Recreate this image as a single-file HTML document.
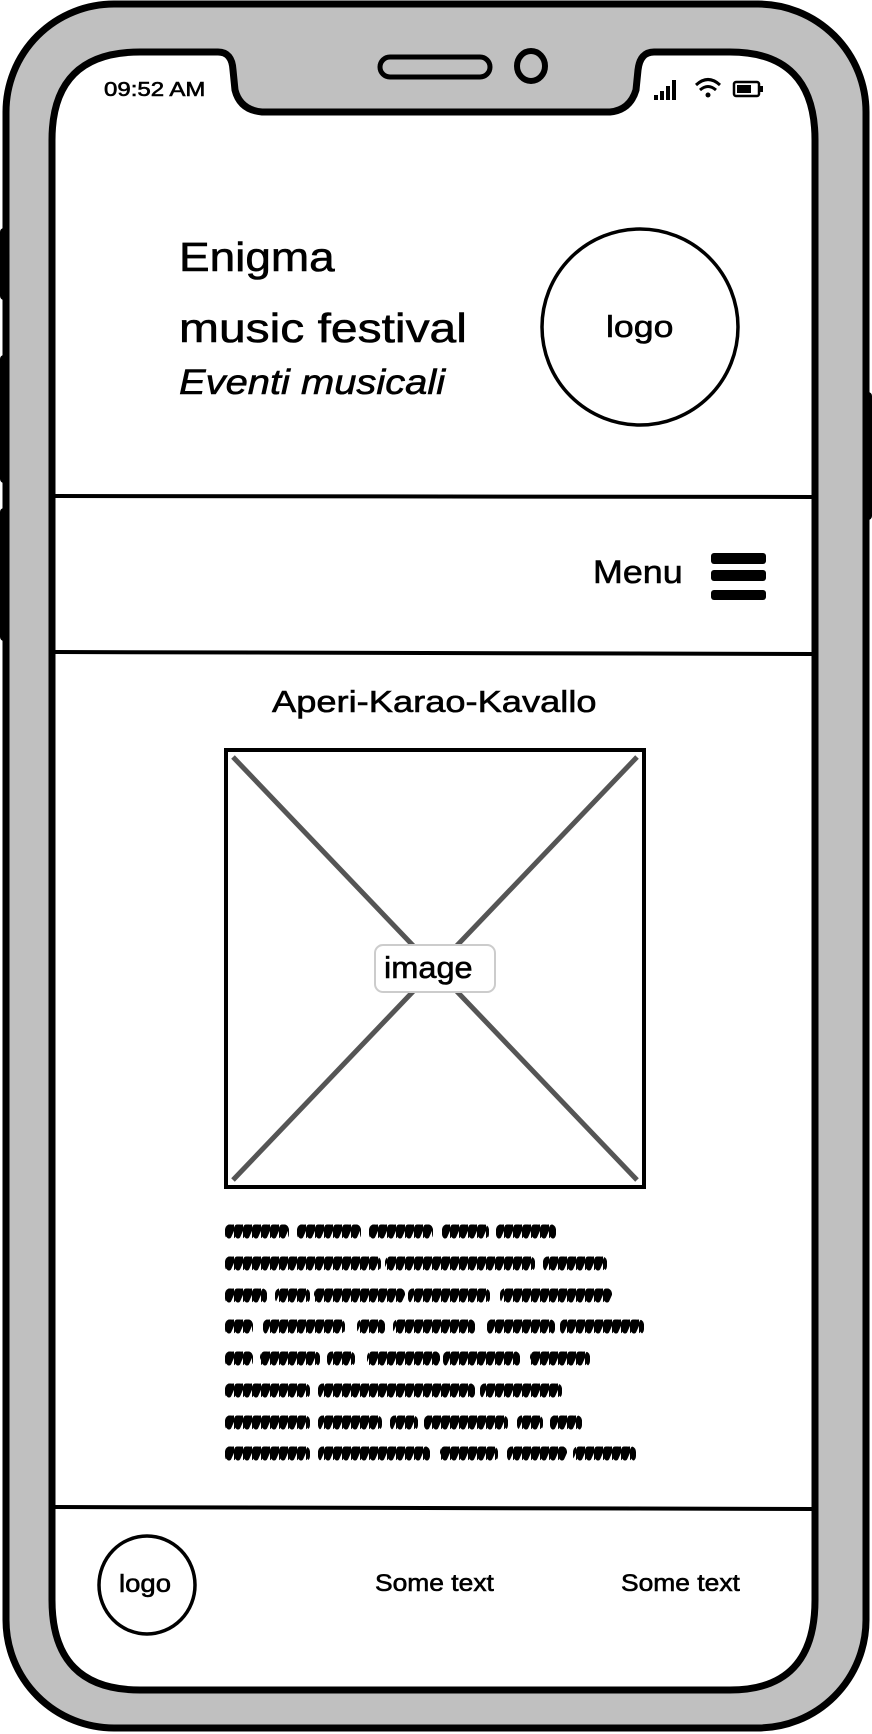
<!DOCTYPE html>
<html><head><meta charset="utf-8"><style>
html,body{margin:0;padding:0;background:#fff;}
body{width:872px;height:1734px;position:relative;overflow:hidden;font-family:"Liberation Sans",sans-serif;color:#000;}
.t{position:absolute;white-space:nowrap;line-height:1;transform-origin:0 0;-webkit-text-stroke:0.6px #000;}
</style></head><body>
<svg width="872" height="1734" style="position:absolute;left:0;top:0">
<defs>
<pattern id="z" width="9" height="16" patternUnits="userSpaceOnUse">
<path d="M-1 12 L3 3 L6 3 L4 12 L8 3 L10 3" stroke="#000" stroke-width="5" fill="none" stroke-linejoin="round" stroke-linecap="round"/>
</pattern>
</defs>
<rect x="0" y="228" width="10" height="72" rx="4" fill="#000"/>
<rect x="0" y="355" width="10" height="128" rx="4" fill="#000"/>
<rect x="0" y="508" width="10" height="133" rx="4" fill="#000"/>
<rect x="862" y="392" width="10" height="128" rx="4" fill="#000"/>
<rect x="6" y="4" width="860" height="1724" rx="108" fill="#c0c0c0" stroke="#000" stroke-width="7"/>
<path d="M140 52 L218 52 Q232 52 233 70 L235 90 Q240 110 262 112 L610 112 Q630 110 636 90 L638 70 Q640 52 654 52 L730 52 Q815 52 815 140 L815 1600 Q815 1690 730 1690 L140 1690 Q52 1690 52 1600 L52 140 Q52 52 140 52 Z" fill="#fff" stroke="#000" stroke-width="7"/>
<rect x="380" y="57" width="110" height="20" rx="10" fill="none" stroke="#000" stroke-width="5"/>
<ellipse cx="531" cy="66" rx="14" ry="15" fill="none" stroke="#000" stroke-width="6"/>
<rect x="654" y="95" width="4" height="5" fill="#000"/>
<rect x="660" y="91" width="4" height="9" fill="#000"/>
<rect x="666" y="86" width="4" height="14" fill="#000"/>
<rect x="672" y="80" width="4" height="20" fill="#000"/>
<path d="M696 85 Q708 74 720 85 M700 90 Q708 83 716 90" stroke="#000" stroke-width="3" fill="none"/>
<circle cx="708" cy="95" r="2.5" fill="#000"/>
<rect x="734" y="82" width="25" height="14" rx="2" fill="none" stroke="#000" stroke-width="2.5"/>
<rect x="737" y="85" width="14" height="8" fill="#000"/>
<rect x="760" y="86" width="3" height="6" fill="#000"/>
<circle cx="640" cy="327" r="98" fill="none" stroke="#000" stroke-width="3.5"/>
<line x1="55" y1="496" x2="812" y2="497" stroke="#000" stroke-width="4"/>
<line x1="55" y1="652" x2="812" y2="654" stroke="#000" stroke-width="4"/>
<line x1="55" y1="1507" x2="812" y2="1509" stroke="#000" stroke-width="4"/>
<rect x="711" y="553" width="55" height="11" rx="3" fill="#000"/>
<rect x="711" y="570" width="55" height="11" rx="3" fill="#000"/>
<rect x="711" y="590" width="55" height="10" rx="3" fill="#000"/>
<rect x="226" y="750" width="418" height="437" fill="#fff" stroke="#000" stroke-width="4"/>
<line x1="233" y1="757" x2="637" y2="1180" stroke="#555" stroke-width="5"/>
<line x1="637" y1="757" x2="233" y2="1180" stroke="#555" stroke-width="5"/>
<rect x="375" y="945" width="120" height="47" rx="8" fill="#fff" stroke="#ccc" stroke-width="2"/>
<g fill="url(#z)">
<g transform="translate(0,1224)"><rect x="225" width="64" height="16" rx="6"/><rect x="297" width="64" height="16" rx="6"/><rect x="369" width="64" height="16" rx="6"/><rect x="442" width="47" height="16" rx="6"/><rect x="496" width="60" height="16" rx="6"/></g>
<g transform="translate(0,1256)"><rect x="225" width="156" height="16" rx="6"/><rect x="385" width="150" height="16" rx="6"/><rect x="543" width="64" height="16" rx="6"/></g>
<g transform="translate(0,1288)"><rect x="225" width="42" height="16" rx="6"/><rect x="275" width="35" height="16" rx="6"/><rect x="314" width="91" height="16" rx="6"/><rect x="408" width="82" height="16" rx="6"/><rect x="500" width="112" height="16" rx="6"/></g>
<g transform="translate(0,1319)"><rect x="225" width="28" height="16" rx="6"/><rect x="263" width="82" height="16" rx="6"/><rect x="357" width="28" height="16" rx="6"/><rect x="393" width="82" height="16" rx="6"/><rect x="487" width="68" height="16" rx="6"/><rect x="560" width="84" height="16" rx="6"/></g>
<g transform="translate(0,1351)"><rect x="225" width="28" height="16" rx="6"/><rect x="260" width="60" height="16" rx="6"/><rect x="327" width="28" height="16" rx="6"/><rect x="367" width="73" height="16" rx="6"/><rect x="443" width="77" height="16" rx="6"/><rect x="530" width="60" height="16" rx="6"/></g>
<g transform="translate(0,1383)"><rect x="225" width="85" height="16" rx="6"/><rect x="318" width="157" height="16" rx="6"/><rect x="480" width="82" height="16" rx="6"/></g>
<g transform="translate(0,1415)"><rect x="225" width="85" height="16" rx="6"/><rect x="318" width="64" height="16" rx="6"/><rect x="390" width="28" height="16" rx="6"/><rect x="424" width="84" height="16" rx="6"/><rect x="517" width="26" height="16" rx="6"/><rect x="550" width="32" height="16" rx="6"/></g>
<g transform="translate(0,1446)"><rect x="225" width="85" height="16" rx="6"/><rect x="318" width="112" height="16" rx="6"/><rect x="440" width="58" height="16" rx="6"/><rect x="507" width="60" height="16" rx="6"/><rect x="573" width="63" height="16" rx="6"/></g>
</g>
<ellipse cx="147" cy="1585" rx="48" ry="49" fill="none" stroke="#000" stroke-width="3.5"/>
</svg>
<div class="t" style="left:104px;top:80px;font-size:20px;transform:scaleX(1.2);">09:52 AM</div>
<div class="t" style="left:179px;top:237px;font-size:41px;transform:scaleX(1.12);">Enigma</div>
<div class="t" style="left:179px;top:308px;font-size:41px;transform:scaleX(1.17);">music festival</div>
<div class="t" style="left:179px;top:365px;font-size:35px;font-style:italic;transform:scaleX(1.14);">Eventi musicali</div>
<div class="t" style="left:606px;top:311px;font-size:31px;transform:scaleX(1.15);">logo</div>
<div class="t" style="left:593px;top:556px;font-size:32px;transform:scaleX(1.12);">Menu</div>
<div class="t" style="left:272px;top:686px;font-size:31px;transform:scaleX(1.17);">Aperi-Karao-Kavallo</div>
<div class="t" style="left:384px;top:952px;font-size:31px;transform:scaleX(1.05);">image</div>
<div class="t" style="left:119px;top:1572px;font-size:25px;transform:scaleX(1.1);">logo</div>
<div class="t" style="left:375px;top:1572px;font-size:24px;transform:scaleX(1.1);">Some text</div>
<div class="t" style="left:621px;top:1572px;font-size:24px;transform:scaleX(1.1);">Some text</div>
</body></html>
